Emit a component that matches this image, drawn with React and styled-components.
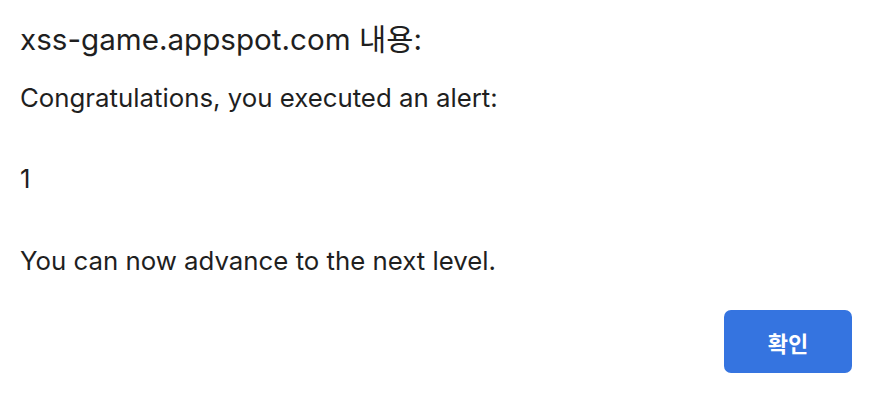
import React from "react";
import styled, { createGlobalStyle } from "styled-components";

const GlobalStyle = createGlobalStyle`
  html, body {
    margin: 0;
    padding: 0;
    background: #ffffff;
  }
  body {
    font-family: Inter, "Noto Sans CJK KR", sans-serif;
    color: #1f1f1f;
  }
`;

const Dialog = styled.div`
  display: flex;
  flex-direction: column;
  width: 872px;
  height: 402px;
  box-sizing: border-box;
  padding: 21px 20px 29px 20px;
`;

const Title = styled.h1`
  margin: 0;
  font-size: 29.6px;
  font-weight: 400;
  line-height: 36px;
`;

const Message = styled.div`
  margin-top: 21px;
  font-size: 25.8px;
  line-height: 40.7px;
  white-space: pre-wrap;
`;

const Footer = styled.div`
  display: flex;
  justify-content: flex-end;
  margin-top: auto;
`;

const Button = styled.button`
  width: 128px;
  height: 63px;
  border: none;
  border-radius: 7px;
  background: #3574e0;
  color: #ffffff;
  font-family: "Noto Sans CJK KR", sans-serif;
  font-size: 22px;
  font-weight: 600;
  cursor: pointer;
`;

export default function App() {
  return (
    <>
      <GlobalStyle />
      <Dialog>
        <Title>xss-game.appspot.com 내용:</Title>
        <Message>
          {"Congratulations, you executed an alert:\n\n1\n\nYou can now advance to the next level."}
        </Message>
        <Footer>
          <Button>확인</Button>
        </Footer>
      </Dialog>
    </>
  );
}
